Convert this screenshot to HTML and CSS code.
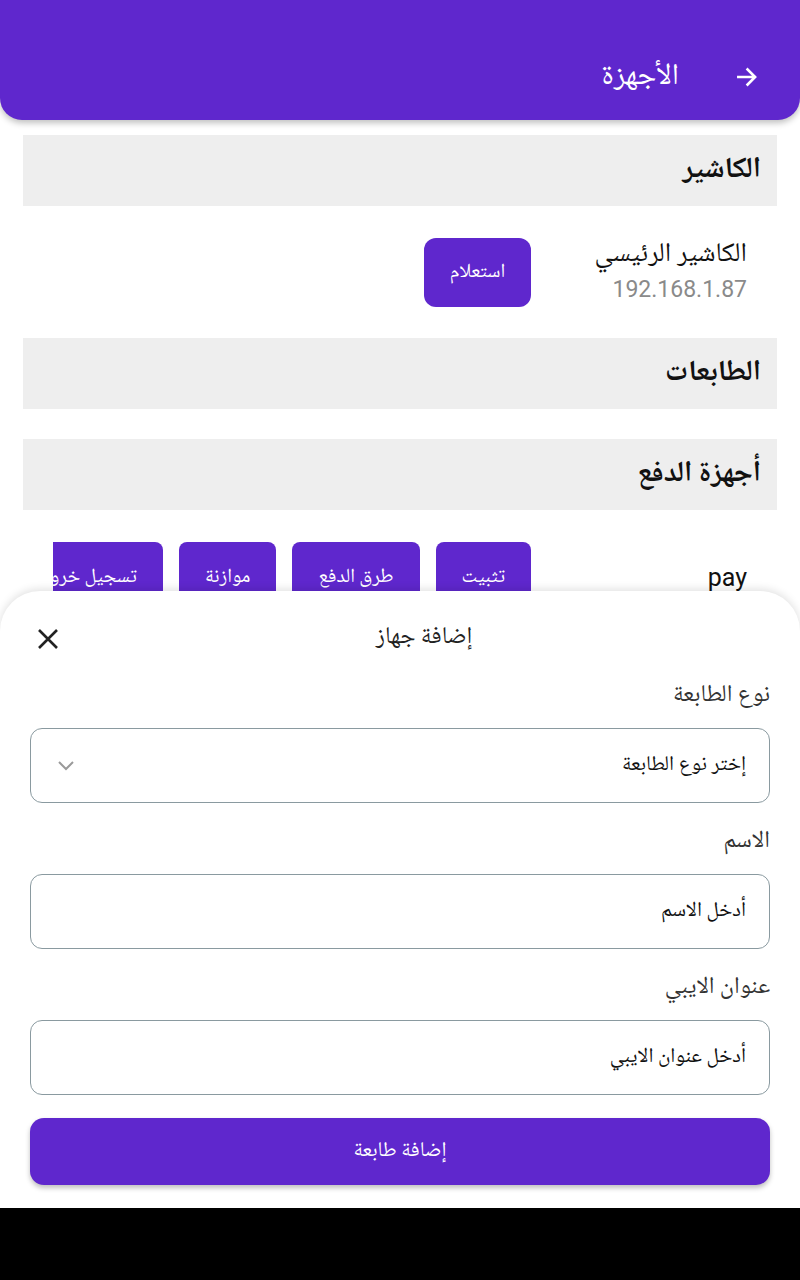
FILE: index.html
```html
<!DOCTYPE html>
<html lang="ar" dir="rtl">
<head>
<meta charset="utf-8">
<title>الأجهزة</title>
<link rel="stylesheet" href="styles.css">
</head>
<body>
<div class="screen">
  <header class="appbar">
    <svg class="back" width="26" height="26" viewBox="0 0 24 24"><path d="M4 12h15M12.5 5l7 7-7 7" fill="none" stroke="#fff" stroke-width="2.4" stroke-linecap="square"/></svg>
    <h1 class="appbar-title">الأجهزة</h1>
  </header>

  <main class="content">
    <section class="group">
      <h2 class="group-title">الكاشير</h2>
      <div class="device-row">
        <div class="device-info">
          <div class="device-name">الكاشير الرئيسي</div>
          <div class="device-ip">192.168.1.87</div>
        </div>
        <div class="actions">
          <button class="btn btn-tall">استعلام</button>
        </div>
      </div>
    </section>

    <section class="group">
      <h2 class="group-title">الطابعات</h2>
    </section>

    <section class="group">
      <h2 class="group-title">أجهزة الدفع</h2>
      <div class="device-row pay-row">
        <div class="device-info">
          <div class="device-name latin">pay</div>
        </div>
        <div class="actions clip">
          <button class="btn">تثبيت</button>
          <button class="btn">طرق الدفع</button>
          <button class="btn">موازنة</button>
          <button class="btn">تسجيل خروج</button>
        </div>
      </div>
    </section>
  </main>

  <div class="sheet">
    <div class="sheet-head">
      <h3 class="sheet-title">إضافة جهاز</h3>
      <svg class="close" width="24" height="24" viewBox="0 0 24 24"><path d="M3 3l18 18M21 3L3 21" stroke="#222" stroke-width="2.6" fill="none"/></svg>
    </div>
    <form class="form">
      <label class="field">
        <span class="label">نوع الطابعة</span>
        <span class="box select">
          <span class="placeholder">إختر نوع الطابعة</span>
          <svg class="chev" width="18" height="12" viewBox="0 0 18 12"><path d="M2 2l7 7 7-7" fill="none" stroke="#9a9a9a" stroke-width="2"/></svg>
        </span>
      </label>
      <label class="field">
        <span class="label">الاسم</span>
        <span class="box"><span class="placeholder">أدخل الاسم</span></span>
      </label>
      <label class="field">
        <span class="label">عنوان الايبي</span>
        <span class="box"><span class="placeholder">أدخل عنوان الايبي</span></span>
      </label>
      <button type="button" class="submit">إضافة طابعة</button>
    </form>
  </div>
</div>
<div class="navbar"></div>
</body>
</html>
```

FILE: styles.css
```css
* { box-sizing: border-box; margin: 0; padding: 0; }
html, body { width: 800px; height: 1280px; overflow: hidden; }
body {
  background: #000;
  font-family: "Noto Naskh Arabic", "DejaVu Sans", "Noto Sans", sans-serif;
  color: #111;
}
.screen {
  position: relative;
  height: 1208px;
  background: #fff;
  overflow: hidden;
}
.appbar {
  height: 120px;
  background: #5f27cd;
  border-radius: 0 0 22px 22px;
  box-shadow: 0 3px 6px rgba(0,0,0,0.25);
  display: flex;
  align-items: flex-end;
  gap: 55px;
  padding: 0 40px 22px;
  color: #fff;
}
.back { flex: none; margin-bottom: 8px; }
.appbar-title {
  font-weight: 400;
  font-size: 30px;
  line-height: 40px;
}
.content { padding: 15px 23px 0; display: flex; flex-direction: column; }
.group { margin-bottom: 30px; }
.group-title {
  height: 71px;
  background: #eeeeee;
  display: flex;
  align-items: center;
  padding: 0 16px;
  font-size: 29px;
  font-weight: 700;
}
.device-row {
  display: flex;
  align-items: center;
  gap: 30px;
  padding: 32px 30px 0 0;
}
.group:first-child .device-row { padding-bottom: 1px; }
.device-info { width: 186px; flex: none; }
.device-name { font-size: 27px; line-height: 36px; margin-top: -4px; }
.device-name.latin { font-family: Roboto, "DejaVu Sans", sans-serif; font-size: 25px; margin-top: 0; }
.device-ip {
  font-family: Roboto, sans-serif;
  font-size: 23px;
  color: #8a8a8a;
  line-height: 30px;
  margin-top: 2px;
}
.actions { display: flex; gap: 16px; }
.actions.clip { width: 478px; overflow: hidden; }
.btn {
  flex: none;
  background: #5f27cd;
  color: #fff;
  border: none;
  border-radius: 8px;
  font-family: inherit;
  font-size: 20px;
  height: 69px;
  padding: 0 26px;
}
.btn-tall { width: 107px; padding: 0; border-radius: 12px; }
.pay-row .btn { height: 72px; }
.sheet {
  position: absolute;
  left: 0; right: 0; top: 591px; bottom: 0;
  background: #fff;
  border-radius: 40px 40px 0 0;
  box-shadow: 0 -2px 8px rgba(0,0,0,0.12);
  padding: 0 30px;
}
.sheet-head {
  height: 88px;
  display: flex;
  align-items: center;
  justify-content: center;
  position: relative;
}
.sheet-title { font-size: 24px; font-weight: 400; color: #222; margin-left: 48px; margin-top: 4px; }
.close { position: absolute; left: 6px; top: 36px; }
.form { display: flex; flex-direction: column; }
.field { display: flex; flex-direction: column; margin-bottom: 22px; }
.label { font-size: 24px; line-height: 34px; color: #333; margin-bottom: 15px; }
.box {
  height: 75px;
  border: 1px solid #8a9aa0;
  border-radius: 12px;
  display: flex;
  align-items: center;
  justify-content: space-between;
  padding: 0 23px 0 26px;
}
.placeholder { font-size: 21px; color: #111; }
.submit {
  margin-top: 1px;
  height: 67px;
  background: #5f27cd;
  color: #fff;
  border: none;
  border-radius: 14px;
  font-family: inherit;
  font-size: 21px;
  box-shadow: 0 3px 5px rgba(0,0,0,0.25);
}
.navbar { height: 72px; background: #000; }
```
